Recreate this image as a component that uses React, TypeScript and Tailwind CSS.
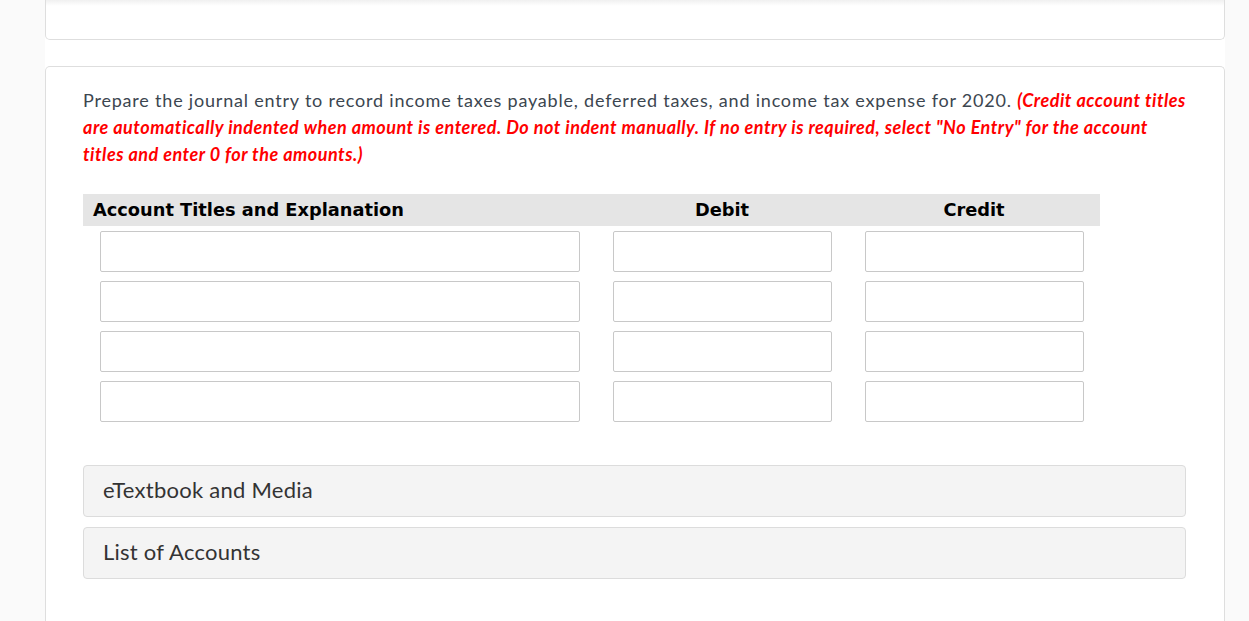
import React from 'react';

const ROWS = [0, 1, 2, 3];

function Field({ className }: { className: string }) {
  return <input type="text" className={`block h-[41px] rounded-[2px] border border-[#c8c8c8] bg-white outline-none ${className}`} />;
}

function Panel({ label }: { label: string }) {
  return (
    <div className="flex h-[52px] items-center rounded-[4px] border border-[#dcdcdc] bg-[#f4f4f4] px-[19px] pb-[3px] text-[22px] tracking-[0.25px] text-[#333]">
      {label}
    </div>
  );
}

export default function App() {
  return (
    <div className="min-h-screen w-full bg-[#fafafa] font-['Lato',sans-serif]">
      <div className="ml-[45px] min-h-[621px] w-[1180px] bg-white">
        <div className="relative h-[40px] rounded-b-[5px] border-x border-b border-[#dedede] bg-white">
          <div className="absolute inset-x-0 top-0 h-[6px] bg-gradient-to-b from-[#f0f0f0] to-white" />
        </div>

        <div className="mt-[26px] min-h-[560px] rounded-t-[5px] border-x border-t border-[#dedede] bg-white pl-[37px] pr-[32px] pt-[20px]">
          <p className="text-[18px] leading-[27px] tracking-[0.8px] text-[#3c4650]">
            Prepare the journal entry to record income taxes payable, deferred taxes, and income tax expense for 2020.{' '}
            <span className="font-bold italic tracking-[0.5px] text-[#ff0000]">
              (Credit account titles are automatically indented when amount is entered. Do not indent manually. If no entry is required, select "No Entry" for the account titles and enter 0 for the amounts.)
            </span>
          </p>

          <div className="mt-[26px] w-[1017px]">
            <div className="flex h-[32px] items-center bg-[#e5e5e5] font-['DejaVu_Sans',sans-serif] text-[17.8px] font-bold text-black">
              <div className="w-[513px] pl-[10px]">Account Titles and Explanation</div>
              <div className="w-[252px] text-center">Debit</div>
              <div className="w-[252px] text-center">Credit</div>
            </div>
            <div className="flex flex-col gap-[9px] pt-[5px]">
              {ROWS.map((r) => (
                <div key={r} className="flex">
                  <div className="w-[513px] pl-[17px]">
                    <Field className="w-[480px]" />
                  </div>
                  <div className="flex w-[252px] justify-center">
                    <Field className="w-[219px]" />
                  </div>
                  <div className="flex w-[252px] justify-center">
                    <Field className="w-[219px]" />
                  </div>
                </div>
              ))}
            </div>
          </div>

          <div className="mt-[43px] flex w-[1103px] flex-col gap-[10px]">
            <Panel label="eTextbook and Media" />
            <Panel label="List of Accounts" />
          </div>
        </div>
      </div>
    </div>
  );
}
